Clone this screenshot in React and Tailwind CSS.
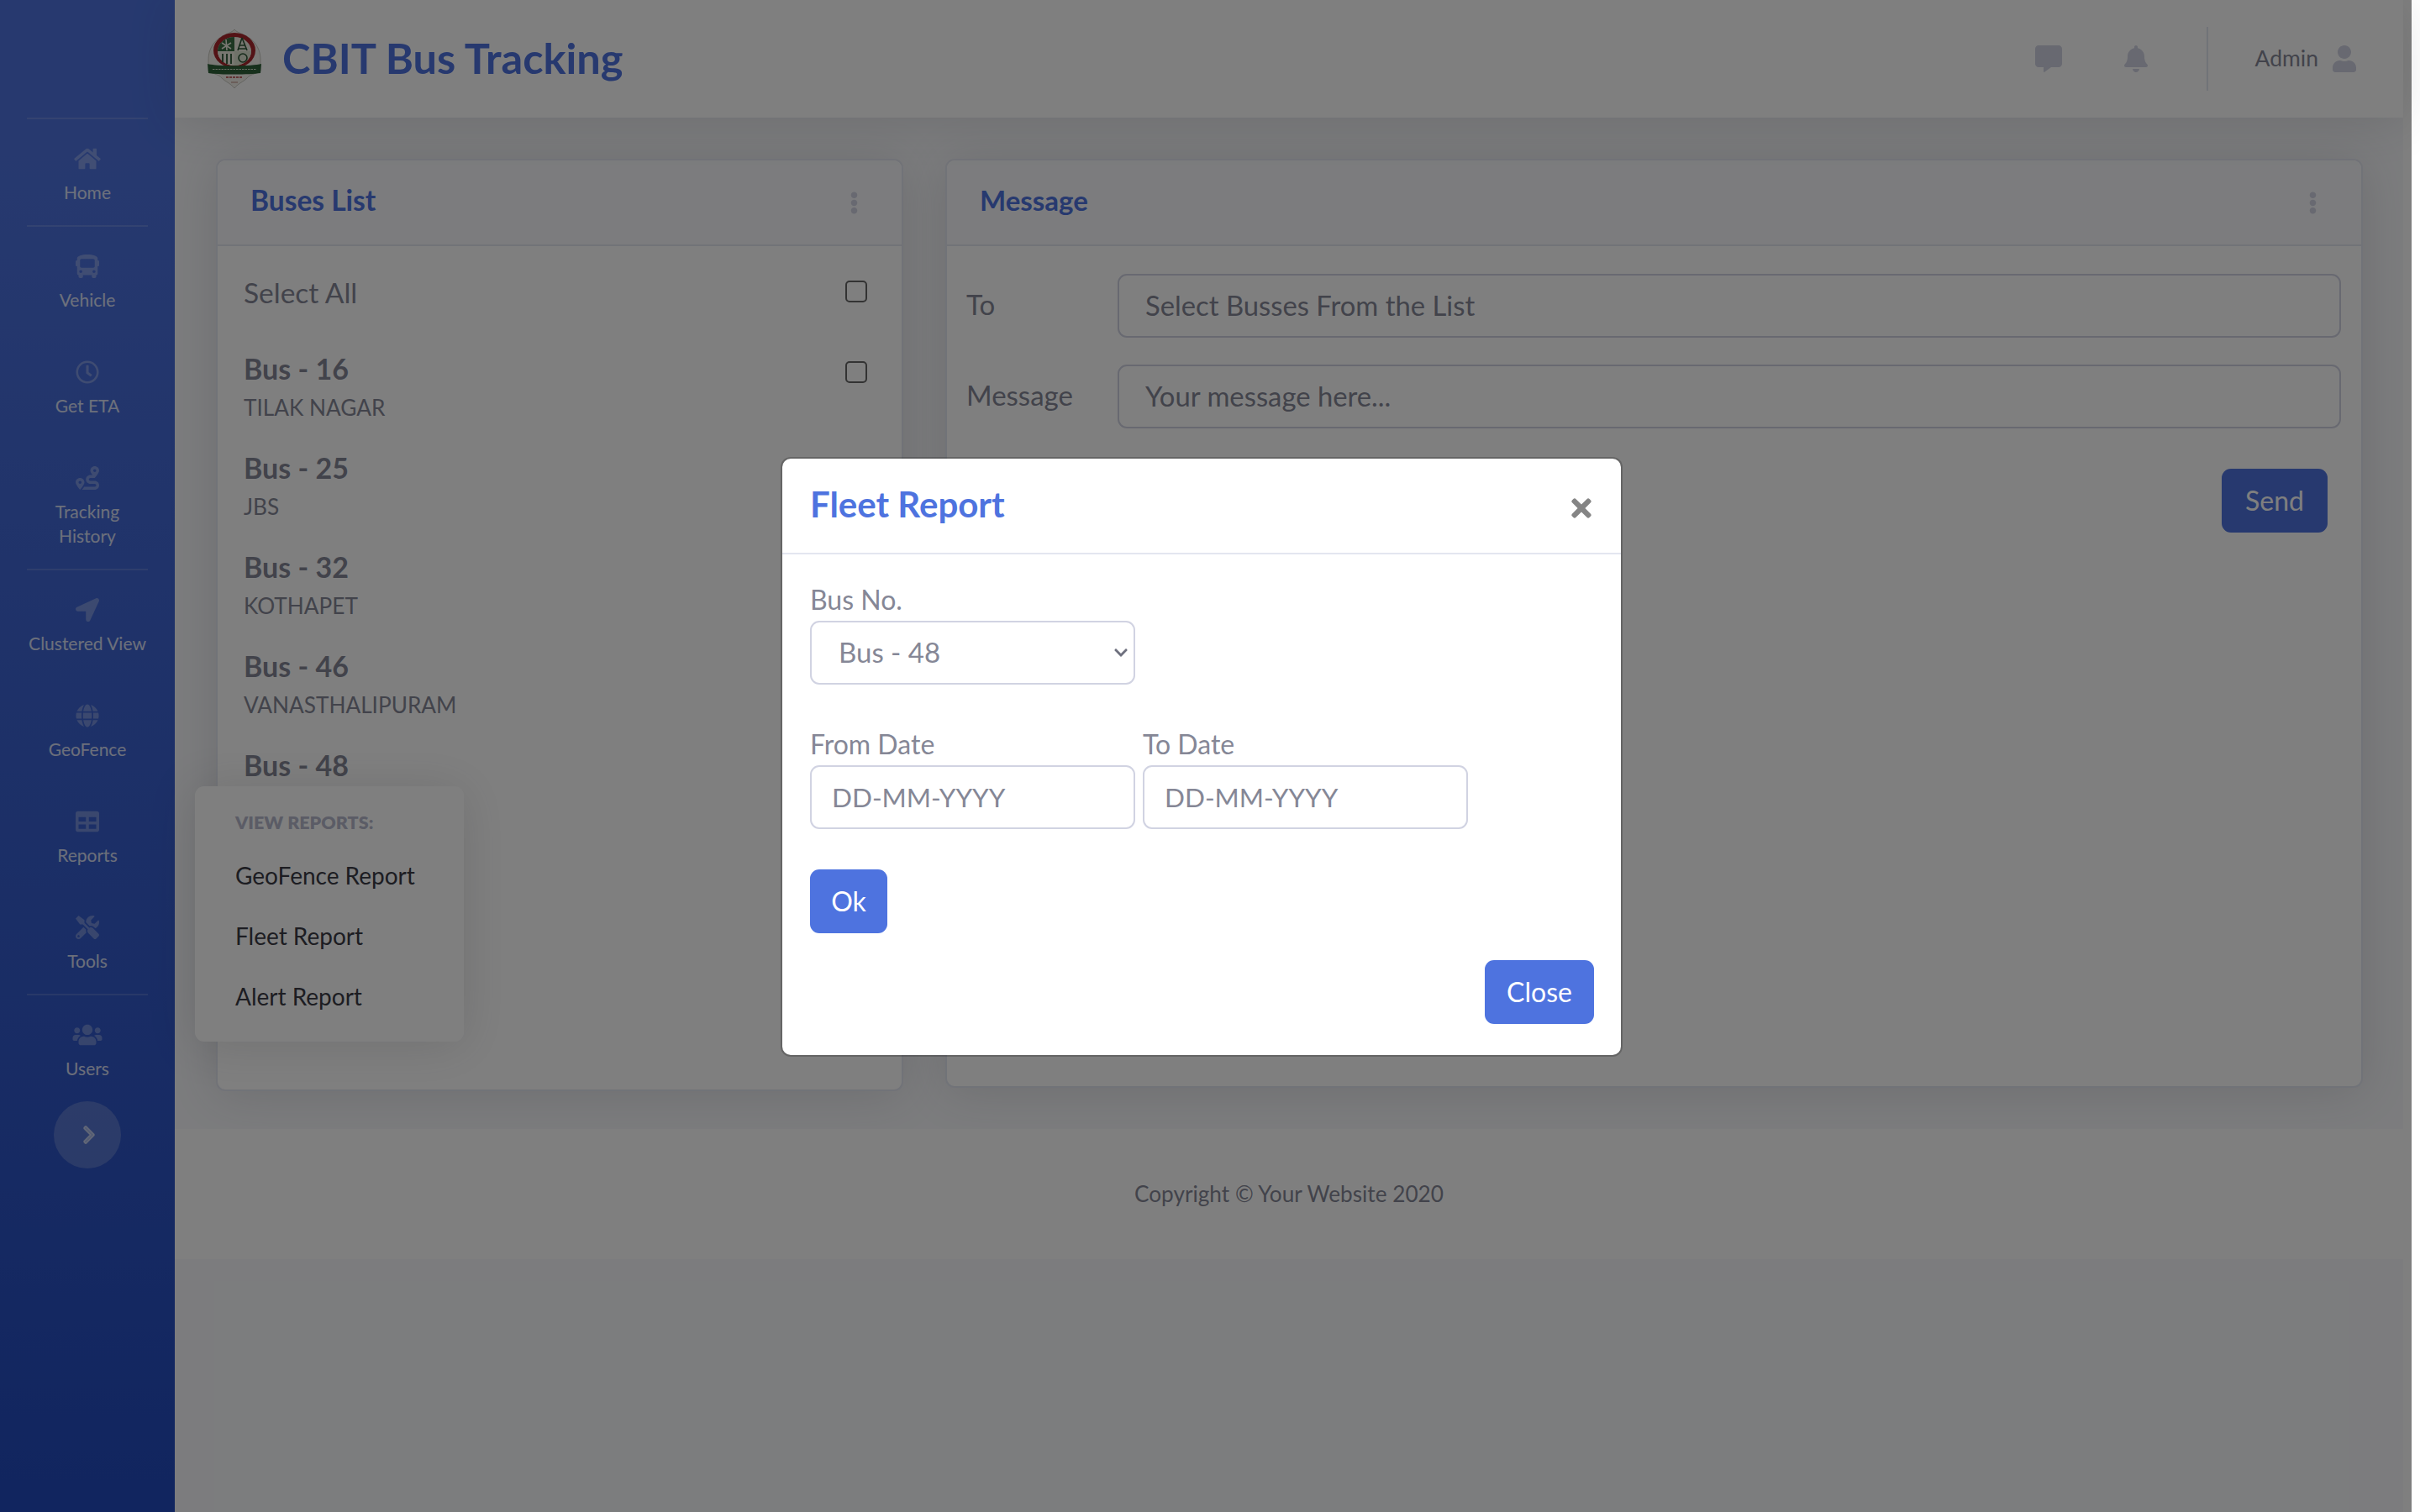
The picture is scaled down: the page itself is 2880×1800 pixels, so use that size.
import React from 'react';
import { FaHome, FaBus, FaRegClock, FaRoute, FaLocationArrow, FaGlobe, FaTable, FaTools, FaUsers, FaChevronRight, FaCommentAlt, FaBell, FaUser, FaEllipsisV, FaTimes, FaChevronDown } from 'react-icons/fa';

const Rule = () => <div className="h-[2px] mx-[32px] bg-white/15" />;

function NavItem({ icon: Icon, size, children }) {
  return (
    <div className="flex flex-col items-center pt-[33px] pb-[25px] text-center">
      <div className="h-[39px] flex items-start justify-center">
        <Icon className={size + ' text-white/30'} />
      </div>
      <div className="text-[21px] leading-[29px] text-white/80 w-[160px]">{children}</div>
    </div>
  );
}

function Logo() {
  return (
    <svg viewBox="0 0 64 70" className="w-[64px] h-[70px] shrink-0">
      <path d="M32 0 C35 4 42 5 48 9 C58 15 63 25 63 36 L63 50 C56 53 50 54 47 58 C43 62 37 64 32 70 C27 64 21 62 17 58 C14 54 8 53 1 50 L1 36 C1 25 6 15 16 9 C22 5 29 4 32 0Z" fill="#f4f2ec" stroke="#c8c8c0" strokeWidth="1" />
      <ellipse cx="32" cy="25" rx="25" ry="21" fill="#a8262c" />
      <ellipse cx="32" cy="26" rx="20" ry="17" fill="#f0eee2" />
      <path d="M32 9 A20 17 0 0 0 12 26 L32 26Z" fill="#3a6e45" />
      <path d="M32 26 L52 26 A20 17 0 0 1 32 43Z" fill="#dfe4d2" />
      <path d="M12 26 A20 17 0 0 0 32 43 L32 26Z" fill="#f0eee2" />
      <path d="M22 12 L23 25 M17 16 L28 23 M28 16 L17 23" stroke="#f0eee2" strokeWidth="1.6" fill="none" />
      <path d="M41 10 L36 25 M41 10 L47 25 M38 19 L45 19 M37 23 L46 23" stroke="#2b5535" strokeWidth="1.6" fill="none" />
      <path d="M18 29 L18 39 M23 29 L23 41 M28 29 L28 41" stroke="#2b5535" strokeWidth="1.8" />
      <circle cx="42" cy="34" r="5" fill="none" stroke="#2b5535" strokeWidth="1.6" />
      <path d="M0 41 C10 44 54 44 64 41 L63 52 C50 54 14 54 1 52Z" fill="#2f6138" />
      <path d="M6 47.5 L58 47.5" stroke="#cfd8c6" strokeWidth="1.2" strokeDasharray="2.5 1" />
      <path d="M22 57 L42 57" stroke="#b03a3a" strokeWidth="1.6" strokeDasharray="3 1" />
      <path d="M28 63 L36 63" stroke="#c9a59c" strokeWidth="1.4" />
    </svg>
  );
}

function BusRow({ name, sub, check }) {
  return (
    <div className="h-[118px] relative">
      <div className="text-[34px] leading-[48px] font-bold text-[#858796]">{name}</div>
      <div className="text-[26.2px] leading-[40px] mt-[2px] text-[#858796]">{sub}</div>
      {check && <input type="checkbox" className="appearance-none absolute right-[41px] top-[15px] w-[26px] h-[26px] border-2 border-[#666] rounded-[5px] bg-white" />}
    </div>
  );
}

const field = 'h-[76px] border-2 border-[#d1d3e2] rounded-[11px] bg-white text-[#858796] placeholder:text-[#858796] outline-none';

export default function App() {
  return (
    <div className="relative w-[2880px] h-[1800px] overflow-hidden bg-white font-['Lato',sans-serif] text-[#858796]">
      <div className="flex w-[2860px] h-[1800px]">
        <aside className="w-[208px] shrink-0 bg-gradient-to-b from-[#4e73df] from-10% to-[#224abe]">
          <div className="h-[140px]" />
          <Rule />
          <NavItem icon={FaHome} size="w-[32px] h-[28px]">Home</NavItem>
          <Rule />
          <NavItem icon={FaBus} size="w-[28px] h-[28px]">Vehicle</NavItem>
          <NavItem icon={FaRegClock} size="w-[28px] h-[28px]">Get ETA</NavItem>
          <NavItem icon={FaRoute} size="w-[28px] h-[28px]">Tracking<br />History</NavItem>
          <Rule />
          <NavItem icon={FaLocationArrow} size="w-[28px] h-[28px]">Clustered View</NavItem>
          <NavItem icon={FaGlobe} size="w-[28px] h-[28px]">GeoFence</NavItem>
          <NavItem icon={FaTable} size="w-[28px] h-[28px]">Reports</NavItem>
          <NavItem icon={FaTools} size="w-[28px] h-[28px]">Tools</NavItem>
          <Rule />
          <NavItem icon={FaUsers} size="w-[36px] h-[28px]">Users</NavItem>
          <div className="flex justify-center">
            <div className="w-[80px] h-[80px] rounded-full bg-white/20 flex items-center justify-center">
              <FaChevronRight className="w-[24px] h-[24px] ml-[4px] text-white/50 stroke-current stroke-[30px]" />
            </div>
          </div>
        </aside>

        <div className="flex-1 flex flex-col bg-[#f8f9fc] min-w-0">
          <header className="h-[140px] bg-white shadow-[0_4px_56px_rgba(58,59,69,0.15)] flex items-center pl-[39px] pr-[54px] relative">
            <Logo />
            <h1 className="ml-[25px] mb-[2px] text-[50.5px] font-bold text-[#4e73df]">CBIT Bus Tracking</h1>
            <div className="ml-auto flex items-center">
              <FaCommentAlt className="w-[32px] h-[32px] text-[#d1d3e2]" />
              <FaBell className="w-[32px] h-[32px] ml-[72px] text-[#d1d3e2]" />
              <div className="w-[2px] h-[76px] bg-[#e3e6f0] ml-[68px]" />
              <span className="ml-[56px] text-[26.5px] text-[#858796]">Admin</span>
              <FaUser className="w-[32px] h-[32px] ml-[15px] text-[#d1d3e2]" />
            </div>
          </header>

          <main className="flex gap-[50px] pl-[49px] pr-[48px] pt-[49px] pb-[45px] items-start">
            <section className="w-[818px] h-[1110px] bg-white border-2 border-[#e3e6f0] rounded-[11px] shadow-[0_4px_56px_rgba(58,59,69,0.15)]">
              <div className="h-[102px] bg-[#f8f9fc] border-b-2 border-[#e3e6f0] rounded-t-[10px] flex items-center justify-between pl-[39px] pr-[43px]">
                <h2 className="text-[33.5px] mb-[5px] font-bold text-[#4e73df]">Buses List</h2>
                <FaEllipsisV className="w-[27px] h-[27px] text-[#d1d3e2]" />
              </div>
              <div className="pl-[31px] pt-[31px]">
                <div className="h-[91px] relative text-[33.5px] leading-[48px]">
                  Select All
                  <input type="checkbox" className="appearance-none absolute right-[41px] top-[10px] w-[26px] h-[26px] border-2 border-[#666] rounded-[5px] bg-white" />
                </div>
                <BusRow name="Bus - 16" sub="TILAK NAGAR" check />
                <BusRow name="Bus - 25" sub="JBS" />
                <BusRow name="Bus - 32" sub="KOTHAPET" />
                <BusRow name="Bus - 46" sub="VANASTHALIPURAM" />
                <BusRow name="Bus - 48" sub="" />
              </div>
            </section>

            <section className="flex-1 h-[1106px] bg-white border-2 border-[#e3e6f0] rounded-[11px] shadow-[0_4px_56px_rgba(58,59,69,0.15)]">
              <div className="h-[102px] bg-[#f8f9fc] border-b-2 border-[#e3e6f0] rounded-t-[10px] flex items-center justify-between pl-[39px] pr-[44px]">
                <h2 className="text-[33px] mb-[5px] font-bold text-[#4e73df]">Message</h2>
                <FaEllipsisV className="w-[27px] h-[27px] text-[#d1d3e2]" />
              </div>
              <div className="pl-[23px] pr-[24px] pt-[33px]">
                <div className="flex items-center">
                  <label className="w-[180px] mb-[2px] text-[33px]">To</label>
                  <input className={field + ' flex-1 px-[31px] pb-[2px] text-[32.8px]'} placeholder="Select Busses From the List" />
                </div>
                <div className="flex items-center mt-[32px]">
                  <label className="w-[180px] mb-[2px] text-[33px]">Message</label>
                  <input className={field + ' flex-1 px-[31px] pb-[2px] text-[32.8px]'} placeholder="Your message here..." />
                </div>
                <div className="flex justify-end mt-[48px] pr-[16px]">
                  <button className="h-[76px] w-[126px] rounded-[11px] bg-[#4e73df] text-white text-[32px]">Send</button>
                </div>
              </div>
            </section>
          </main>

          <footer className="h-[155px] bg-white flex items-center justify-center text-[26.2px] text-[#858796]">
            Copyright © Your Website 2020
          </footer>
        </div>
      </div>

      {/* reports flyout */}
      <div className="absolute left-[232px] top-[936px] w-[320px] h-[304px] bg-white rounded-[11px] shadow-[0_4px_56px_rgba(58,59,69,0.15)] pl-[48px] pt-[28px]">
        <div className="text-[21.5px] leading-[30px] font-extrabold text-[#b7b9cc]">VIEW REPORTS:</div>
        <div className="mt-[12px] text-[28px] leading-[72px] text-[#3a3b45]">
          <div>GeoFence Report</div>
          <div>Fleet Report</div>
          <div>Alert Report</div>
        </div>
      </div>

      {/* modal backdrop */}
      <div className="absolute left-0 top-0 w-[2870px] h-[1800px] bg-black/50" />

      {/* modal */}
      <div className="absolute left-[929px] top-[544px] w-[1002px] h-[714px] bg-white border-2 border-black/20 bg-clip-padding rounded-[12px]">
        <div className="h-[114px] border-b-2 border-[#e3e6f0] flex items-center justify-between pl-[33px] pr-[34px]">
          <h3 className="text-[42px] mb-[4px] font-bold text-[#4e73df]">Fleet Report</h3>
          <FaTimes className="w-[26px] h-[34px] text-[#858585] mt-[5px]" />
        </div>
        <div className="pl-[33px] pr-[32px] pt-[30px]">
          <label className="block text-[32px] leading-[48px]">Bus No.</label>
          <div className="relative w-[387px] mt-[1px]">
            <select defaultValue="Bus - 48" className={field + ' appearance-none w-full pl-[32px] pr-[40px] text-[33px]'}>
              <option>Bus - 48</option>
            </select>
            <FaChevronDown className="absolute right-[7px] top-[29px] w-[20px] h-[18px] text-[#6e707e]" />
          </div>
          <div className="flex gap-[9px] mt-[47px]">
            <div className="w-[387px]">
              <label className="block text-[32px] leading-[48px]">From Date</label>
              <input className={field + ' w-full px-[24px] mt-[1px] text-[31.5px]'} placeholder="DD-MM-YYYY" />
            </div>
            <div className="w-[387px]">
              <label className="block text-[32px] leading-[48px]">To Date</label>
              <input className={field + ' w-full px-[24px] mt-[1px] text-[31.5px]'} placeholder="DD-MM-YYYY" />
            </div>
          </div>
          <button className="block mt-[48px] w-[92px] h-[76px] rounded-[11px] bg-[#4e73df] text-white text-[32px]">Ok</button>
          <div className="flex justify-end mt-[32px]">
            <button className="w-[130px] h-[76px] rounded-[11px] bg-[#4e73df] text-white text-[32px]">Close</button>
          </div>
        </div>
      </div>
    </div>
  );
}
